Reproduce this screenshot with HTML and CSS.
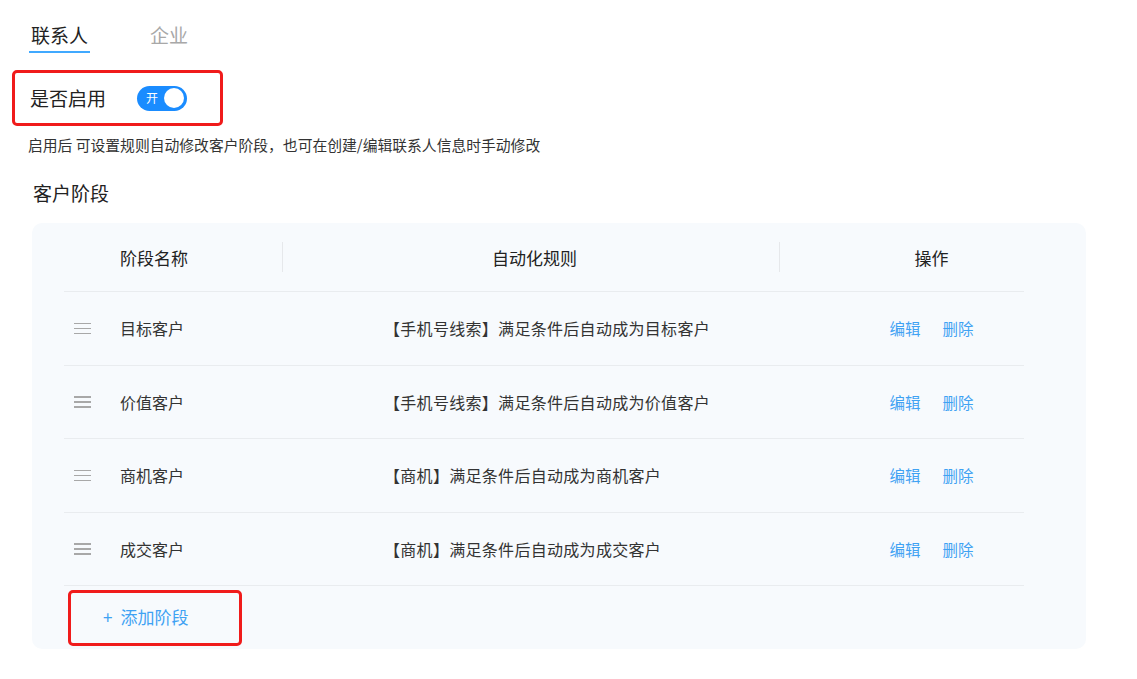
FILE: index.html
```html
<!DOCTYPE html>
<html lang="zh-CN">
<head>
  <meta charset="UTF-8" />
  <title>客户阶段</title>
  <link rel="stylesheet" href="styles.css">
</head>
<body>

<div class="tabs">
  <div class="tab active">联系人</div>
  <div class="tab">企业</div>
</div>

<div class="enable-box">
  <span class="enable-label">是否启用</span>
  <span class="switch"><span class="switch-text">开</span><span class="knob"></span></span>
</div>

<p class="desc">启用后 可设置规则自动修改客户阶段，也可在创建/编辑联系人信息时手动修改</p>

<h2 class="section-title">客户阶段</h2>

<div class="card">
  <div class="row head">
    <div class="col name">阶段名称</div>
    <div class="col rule"><span class="divider"></span>自动化规则</div>
    <div class="col ops"><span class="divider"></span>操作</div>
  </div>

  <div class="row">
    <div class="col name"><span class="drag"><i></i><i></i><i></i></span>目标客户</div>
    <div class="col rule">【手机号线索】满足条件后自动成为目标客户</div>
    <div class="col ops"><a>编辑</a><a>删除</a></div>
  </div>
  <div class="row">
    <div class="col name"><span class="drag"><i></i><i></i><i></i></span>价值客户</div>
    <div class="col rule">【手机号线索】满足条件后自动成为价值客户</div>
    <div class="col ops"><a>编辑</a><a>删除</a></div>
  </div>
  <div class="row">
    <div class="col name"><span class="drag"><i></i><i></i><i></i></span>商机客户</div>
    <div class="col rule">【商机】满足条件后自动成为商机客户</div>
    <div class="col ops"><a>编辑</a><a>删除</a></div>
  </div>
  <div class="row">
    <div class="col name"><span class="drag"><i></i><i></i><i></i></span>成交客户</div>
    <div class="col rule">【商机】满足条件后自动成为成交客户</div>
    <div class="col ops"><a>编辑</a><a>删除</a></div>
  </div>

  <div class="add-row">
    <div class="add-btn"><span class="plus">+</span>添加阶段</div>
  </div>
</div>

</body>
</html>
```

FILE: styles.css
```css
html, body {
  margin: 0; padding: 0;
  font-family: "Noto Sans CJK SC", "Noto Sans", sans-serif;
  background: #fff; color: #333;
}

.tabs { display: flex; gap: 58px; padding-left: 29px; }
.tab {
  padding: 24px 2px 5px; line-height: 22px;
  font-size: 19px; color: #a8a8a8;
  border-bottom: 2px solid transparent;
}
.tab.active { color: #222; border-bottom-color: #40a9ff; }

.enable-box {
  margin: 17px 0 0 12px; width: 211px; height: 56px;
  box-sizing: border-box; border: 3px solid #f01b1b; border-radius: 5px;
  display: flex; align-items: center; padding-left: 15px;
}
.enable-label { font-size: 19px; color: #222; line-height: 24px; }
.switch {
  margin-left: 31px; width: 50px; height: 25px; border-radius: 13px;
  background: #1a8cff; display: flex; align-items: center;
  justify-content: space-between; padding: 0 3px 0 9px; box-sizing: border-box;
}
.switch-text { color: #fff; font-size: 12px; line-height: 14px; }
.knob { width: 20px; height: 20px; border-radius: 50%; background: #fff; }

.desc {
  margin: 9px 0 0 28px; font-size: 14.8px; line-height: 20px; color: #333;
}

.section-title {
  margin: 25px 0 0 33px; font-size: 19px; font-weight: normal;
  line-height: 26px; color: #222;
}

.card {
  margin: 17px 0 0 32px; width: 1054px; box-sizing: border-box;
  background: #f7fafd; border-radius: 10px;
  padding: 0 62px 3px 32px;
}

.row {
  display: grid; grid-template-columns: 218px 497px 245px;
  height: 73.5px; box-sizing: border-box;
  border-bottom: 1px solid #e9ecef; align-items: center;
  font-size: 16px; color: #333;
}
.row.head { height: 69px; font-size: 17px; color: #222; }

.col { position: relative; display: flex; align-items: center; height: 100%; }
.col.name { padding-left: 56px; }
.row .col.name:has(.drag) { padding-left: 10px; }
.col.rule { padding-left: 102px; letter-spacing: 0.3px; }
.row.head .col.rule { justify-content: center; padding-left: 8px; letter-spacing: 0; }
.col.ops { justify-content: center; padding-left: 60px; gap: 22px; }

.divider {
  position: absolute; left: 0; top: 50%; margin-top: -15px;
  width: 1px; height: 30px; background: #e6e8eb;
}

.drag {
  width: 17px; display: flex; flex-direction: column; gap: 3.5px;
  margin-right: 29px;
}
.drag i { display: block; height: 1.5px; background: #a8a8a8; }

.ops a { color: #3fa2f3; font-size: 15.5px; cursor: pointer; }

.add-row { padding-top: 5px; padding-left: 4px; }
.add-btn {
  width: 174px; height: 56px; box-sizing: border-box;
  border: 3px solid #f01b1b; border-radius: 5px;
  display: flex; align-items: center; padding: 0 0 4px 32px;
  color: #3fa2f3; font-size: 17px; margin-top: -1px;
}
.plus { margin-right: 8px; font-size: 17px; }
```
